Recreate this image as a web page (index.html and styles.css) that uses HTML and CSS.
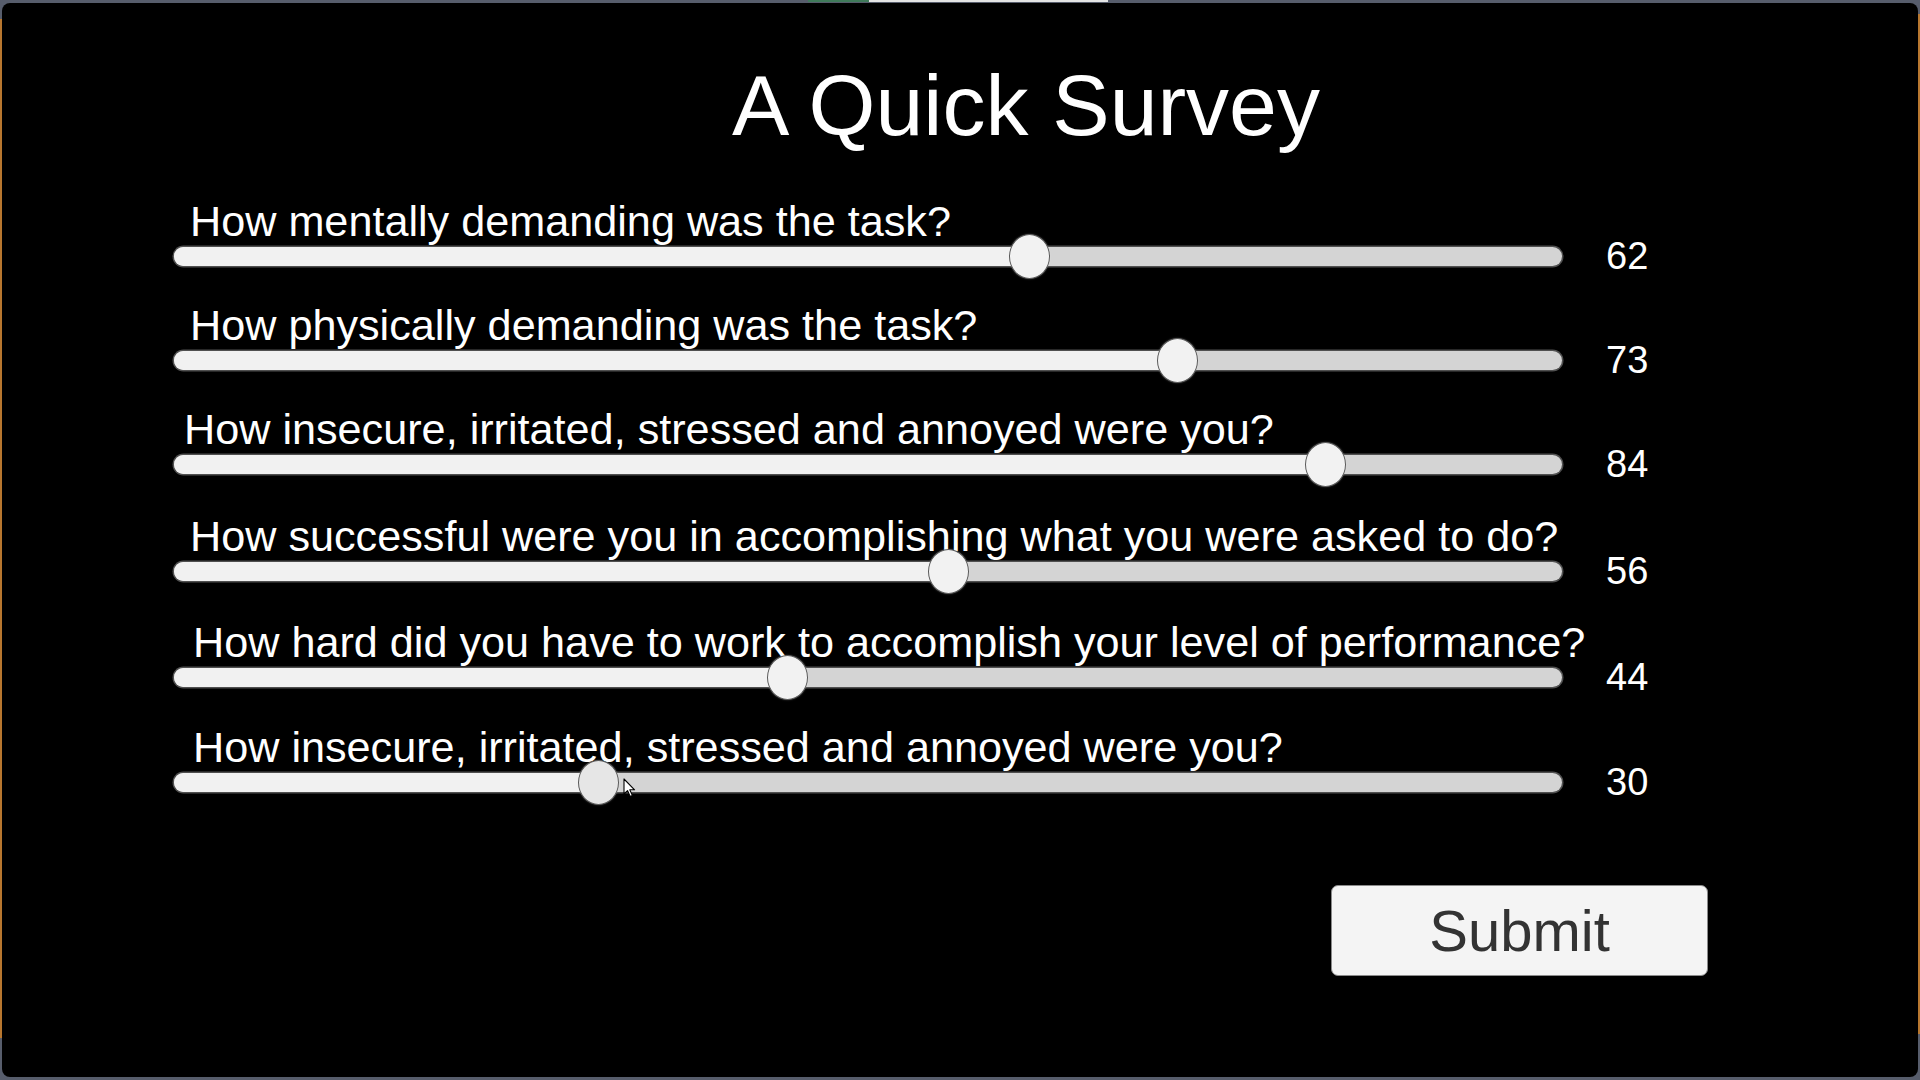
FILE: index.html
```html
<!DOCTYPE html>
<html lang="en">
<head>
<meta charset="utf-8">
<title>A Quick Survey</title>
<link rel="stylesheet" href="styles.css">
</head>
<body>
<div class="window">
  <main class="screen">
    <div class="survey">
      <h1 class="title">A Quick Survey</h1>

      <div class="questions">
        <div class="question">
          <div class="label">How mentally demanding was the task?</div>
          <div class="track" style="--v:62"><div class="fill"></div><div class="thumb"></div></div>
          <div class="value">62</div>
        </div>

        <div class="question">
          <div class="label">How physically demanding was the task?</div>
          <div class="track" style="--v:73"><div class="fill"></div><div class="thumb"></div></div>
          <div class="value">73</div>
        </div>

        <div class="question">
          <div class="label label--near">How insecure, irritated, stressed and annoyed were you?</div>
          <div class="track" style="--v:84"><div class="fill"></div><div class="thumb"></div></div>
          <div class="value">84</div>
        </div>

        <div class="question question--loose">
          <div class="label">How successful were you in accomplishing what you were asked to do?</div>
          <div class="track" style="--v:56"><div class="fill"></div><div class="thumb"></div></div>
          <div class="value">56</div>
        </div>

        <div class="question question--spaced">
          <div class="label label--far">How hard did you have to work to accomplish your level of performance?</div>
          <div class="track" style="--v:44"><div class="fill"></div><div class="thumb"></div></div>
          <div class="value">44</div>
        </div>

        <div class="question question--nudge">
          <div class="label label--far">How insecure, irritated, stressed and annoyed were you?</div>
          <div class="track" style="--v:30"><div class="fill"></div><div class="thumb thumb--hover"></div>
            <svg class="cursor" width="13" height="20" viewBox="0 0 13 20" aria-hidden="true">
              <path d="M1 1 L1 16 L4.5 12.6 L7.2 18.6 L9.4 17.6 L6.8 11.8 L11.6 11.8 Z" fill="#ffffff" stroke="#000000" stroke-width="1.1" stroke-linejoin="round"/>
            </svg>
          </div>
          <div class="value">30</div>
        </div>
      </div>

      <div class="actions">
        <button class="submit" type="button">Submit</button>
      </div>
    </div>
  </main>
</div>
</body>
</html>
```

FILE: styles.css
```css
* {
  box-sizing: border-box;
}

html, body {
  margin: 0;
  padding: 0;
  width: 1920px;
  height: 1080px;
  overflow: hidden;
}

body {
  font-family: "Liberation Sans", Arial, sans-serif;
  background: #575d6c;
}

.window {
  width: 1920px;
  height: 1080px;
  padding: 3px 2px 3px 2px;
  background:
    linear-gradient(#3f7a5a, #3f7a5a) 808px 0 / 61px 2px no-repeat,
    linear-gradient(#e4e4e4, #e4e4e4) 869px 0 / 239px 2px no-repeat,
    linear-gradient(#b8772f, #b8772f) 0 19px / 2px 1019px no-repeat,
    linear-gradient(#b8772f, #b8772f) right 14px / 2px 1020px no-repeat,
    #575d6c;
}

.screen {
  display: block;
  height: 100%;
  background: #000;
  border-radius: 8px;
  overflow: hidden;
}

.survey {
  padding-left: 169px;
}

.title {
  width: 1710px;
  margin: 52px 0 0 0;
  font-size: 86px;
  line-height: 100px;
  font-weight: 400;
  color: #ffffff;
  text-align: center;
}

.questions {
  margin-top: 46px;
  margin-left: 3px;
  display: flex;
  flex-direction: column;
  gap: 39px;
}

.question {
  display: grid;
  grid-template-columns: 1388px auto;
  grid-template-rows: 46px 19px;
  column-gap: 44px;
}

.question--loose {
  margin-top: 3px;
}

.question--spaced {
  margin-top: 2px;
}

.question--nudge {
  margin-top: 1px;
}

.label {
  grid-column: 1 / -1;
  grid-row: 1;
  padding-left: 16px;
  font-size: 43.2px;
  line-height: 41px;
  color: #ffffff;
  white-space: nowrap;
}

.label--near {
  padding-left: 10px;
}

.label--far {
  padding-left: 19px;
}

.track {
  grid-column: 1;
  grid-row: 2;
  position: relative;
  height: 19px;
  border-radius: 10px;
  background: #d4d4d4;
  box-shadow: 0 0 0 1.5px #505050;
}

.fill {
  height: 100%;
  width: calc(20.5px + (100% - 41px) * var(--v) / 100);
  border-radius: 10px 0 0 10px;
  background: #f1f1f1;
}

.thumb {
  position: absolute;
  top: -13px;
  left: calc((100% - 41px) * var(--v) / 100);
  width: 41px;
  height: 45px;
  border-radius: 50%;
  background: #f2f2f2;
  border: 1.5px solid #5a5a5a;
  box-shadow: 0 0 2px rgba(255, 255, 255, 0.25);
}

.thumb--hover {
  background: #e6e6e6;
}

.cursor {
  position: absolute;
  left: 449px;
  top: 5px;
}

.value {
  grid-column: 2;
  grid-row: 2;
  font-size: 38px;
  line-height: 19px;
  color: #ffffff;
  white-space: nowrap;
}

.actions {
  width: 1537px;
  margin-top: 93px;
  display: flex;
  justify-content: flex-end;
}

.submit {
  width: 377px;
  height: 91px;
  padding: 0;
  border: 1.5px solid #8a8a8a;
  border-radius: 7px;
  background: #f4f4f4;
  font-family: "Liberation Sans", Arial, sans-serif;
  font-size: 58px;
  line-height: 1;
  color: #333333;
  cursor: pointer;
}
```
